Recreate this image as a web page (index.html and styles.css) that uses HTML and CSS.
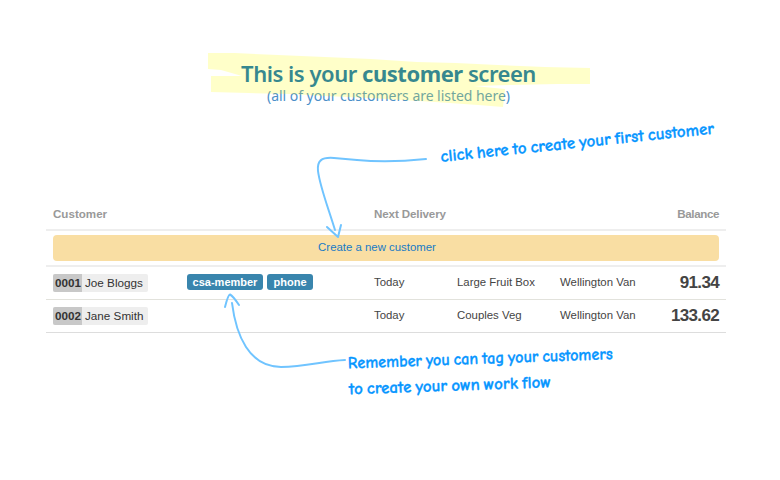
FILE: index.html
```html
<!DOCTYPE html>
<html lang="en">
<head>
<meta charset="utf-8">
<title>Customers</title>
<link rel="stylesheet" href="styles.css">
</head>
<body>
<main class="page">
  <header class="intro">
    <h1>This is your <b>customer</b> screen</h1>
    <p>(all of your customers are listed here)</p>
  </header>
  <section class="table">
    <div class="row head"><span>Customer</span><span></span><span class="wide">Next Delivery</span><span class="right">Balance</span></div>
    <div class="create"><a>Create a new customer</a></div>
    <div class="row first">
      <span class="person"><b>0001</b><i>Joe Bloggs</i></span>
      <span class="tags"><b class="member">csa-member</b><b class="phone">phone</b></span>
      <span>Today</span><span>Large Fruit Box</span><span>Wellington Van</span><strong>91.34</strong>
    </div>
    <div class="row last">
      <span class="person"><b>0002</b><i>Jane Smith</i></span>
      <span></span>
      <span>Today</span><span>Couples Veg</span><span>Wellington Van</span><strong>133.62</strong>
    </div>
  </section>
  <svg class="notes" width="780" height="480" viewBox="0 0 780 480">
    <g class="marker">
      <path d="M208 53H235L278 55L325 57L371 59L417 62L456 63L498 65L545 67L590 68V84H558L510 85L474 86L505 89L503 107L478 105L435 102L402 100L370 98L325 96L290 94L248 93L211 92V76H242L221 70L208 69Z"/>
    </g>
    <g class="arrow">
      <path d="M426 159C398 162 377 162 357 160L334 158C321 157 317 161 318 171C320 187 328 207 335 230"/>
      <path d="M327 227L338 237L341 225"/>
      <path d="M345 360C323 361 306 367 281 367C249 367 236 335 232 303"/>
      <path d="M225 307Q228 295 230 294.500Q233 296 239 305"/>
    </g>
    <g class="hand">
      <text transform="translate(441 162) rotate(-5.900)" textLength="275" lengthAdjust="spacingAndGlyphs">click here to create your first customer</text>
      <text transform="translate(348 368.500) rotate(-2)" textLength="265" lengthAdjust="spacingAndGlyphs">Remember you can tag your customers</text>
      <text transform="translate(349 394.500) rotate(-2)" textLength="202" lengthAdjust="spacingAndGlyphs">to create your own work flow</text>
    </g>
  </svg>
</main>
</body>
</html>
```
FILE: styles.css
```css
* { box-sizing: border-box; }
body { margin: 0; background: #fff; }
.page {
  position: relative;
  width: 780px;
  height: 480px;
  overflow: hidden;
  padding: 60px 54px 0 46px;
  font: 11.4px/16px "Liberation Sans", Arial, sans-serif;
  color: #444;
}
.intro {
  height: 138px;
  margin-left: 5px;
  text-align: center;
  font-family: "Noto Sans", sans-serif;
  white-space: nowrap;
}
.intro h1 {
  margin: 0;
  font-size: 22px;
  line-height: 27px;
  font-weight: 600;
  letter-spacing: -0.47px;
  color: #0068b6;
}
.intro b { font-weight: 700; }
.intro p {
  margin: 0;
  font-size: 14px;
  line-height: 17px;
  letter-spacing: -0.04px;
  color: #4c8fc9;
}
.row {
  display: grid;
  grid-template-columns: 134px 187px 83px 103px 80px 1fr;
  align-items: center;
  padding: 0 7px 2px;
  white-space: nowrap;
}
.head {
  height: 33px;
  padding-bottom: 0;
  border-bottom: 2px solid #eee;
  font-size: 11.6px;
  font-weight: bold;
  color: #999;
}
.wide { grid-column: span 3; letter-spacing: -0.12px; }
.right { text-align: right; letter-spacing: -0.4px; }
.create {
  height: 36px;
  padding: 4px 7px;
  border-bottom: 2px solid #eee;
}
.create a {
  display: block;
  height: 26px;
  padding-right: 18px;
  border-radius: 4px;
  background: #f9dea3;
  color: #167ac6;
  line-height: 25px;
  text-align: center;
}
.first { height: 33px; border-bottom: 1px solid #e2e2dc; }
.last { height: 33px; border-bottom: 1px solid #ddd; }
.row strong { margin-top: 2px; text-align: right; font-size: 17px; letter-spacing: -0.65px; }
.person {
  display: flex;
  justify-self: start;
  height: 18px;
  margin-top: 2px;
  font-size: 11.7px;
  line-height: 18px;
  border-radius: 2px;
  overflow: hidden;
  background: #eee;
  color: #333;
}
.person b { width: 29px; padding-left: 2px; background: #c8c8c8; }
.person i { padding: 0 5px 0 3px; font-style: normal; }
.tags { display: flex; gap: 4px; }
.tags b {
  height: 16px;
  border-radius: 3px;
  background: #3985ad;
  color: #fff;
  font-size: 11px;
  line-height: 16px;
  text-align: center;
}
.member { width: 76px; }
.phone { width: 46px; }
.notes { position: absolute; inset: 0; }
.marker { fill: #ff0; opacity: 0.21; }
.arrow { fill: none; stroke: #70c4ff; stroke-width: 2; stroke-linecap: round; stroke-linejoin: round; }
.hand {
  fill: #0796ff;
  stroke: #0796ff;
  stroke-width: 0.3;
  font: bold 17px "Comic Neue", "Comic Sans MS", cursive;
  word-spacing: -2px;
}
```
